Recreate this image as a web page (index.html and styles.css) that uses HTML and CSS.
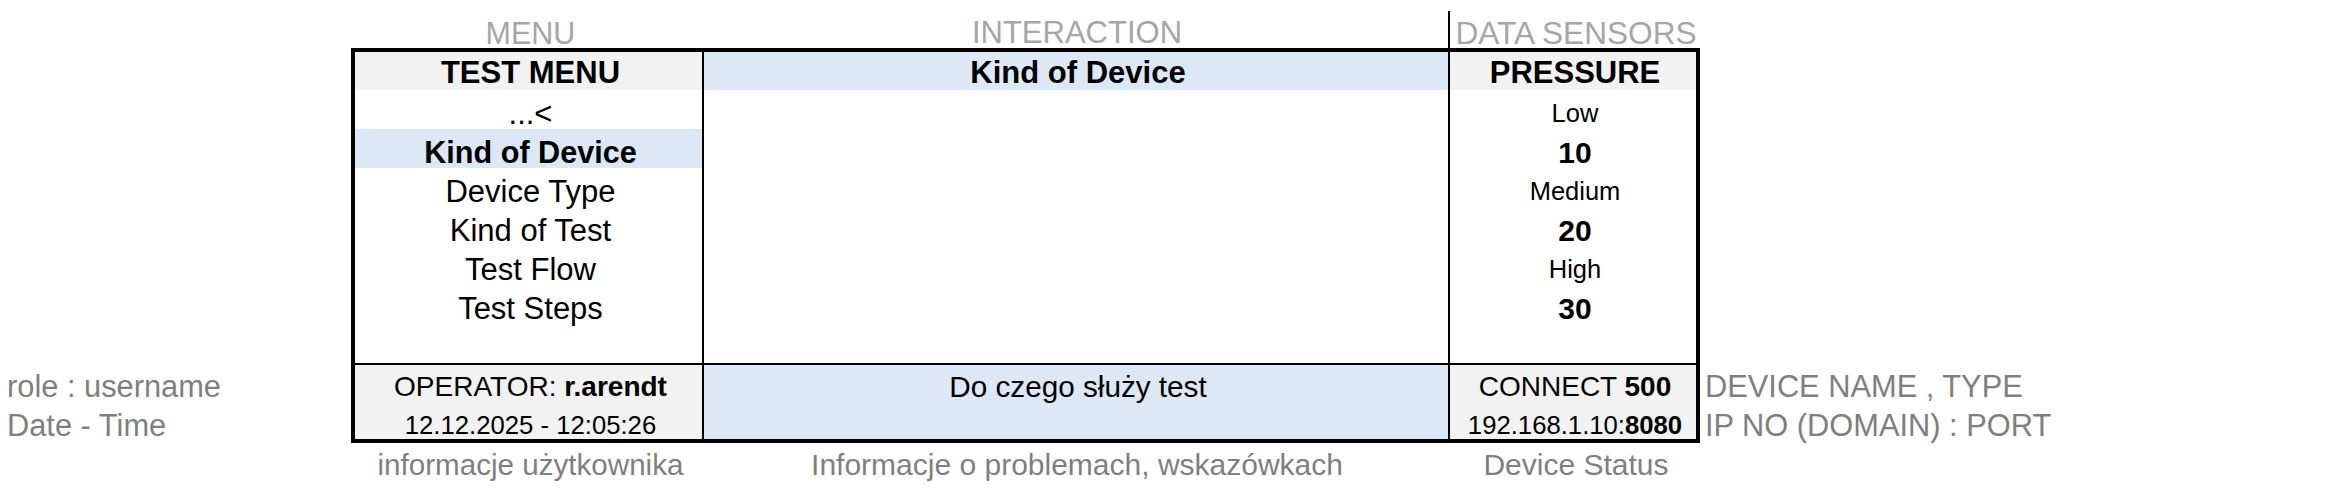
FILE: index.html
```html
<!DOCTYPE html>
<html lang="pl">
<head>
<meta charset="utf-8">
<title>Test Menu</title>
<link rel="stylesheet" href="styles.css">
</head>
<body>
<div class="page">
  <div class="top-labels">
    <div class="top-label top-label-menu">MENU</div>
    <div class="top-label top-label-inter">INTERACTION</div>
    <div class="top-label top-label-data">DATA SENSORS</div>
  </div>

  <div class="side side-left">
    <div class="side-line">role : username</div>
    <div class="side-line">Date - Time</div>
  </div>

  <div class="table">
    <div class="col col-menu">
      <div class="cell head grey">TEST MENU</div>
      <div class="cell">...&lt;</div>
      <div class="cell blue strong">Kind of Device</div>
      <div class="cell">Device Type</div>
      <div class="cell">Kind of Test</div>
      <div class="cell">Test Flow</div>
      <div class="cell">Test Steps</div>
      <div class="cell"></div>
      <div class="foot grey">
        <div class="foot-line">OPERATOR: <b>r.arendt</b></div>
        <div class="foot-line small">12.12.2025 - 12:05:26</div>
      </div>
    </div>
    <div class="col col-inter">
      <div class="cell head blue">Kind of Device</div>
      <div class="inter-body"></div>
      <div class="foot blue">
        <div class="foot-line msg">Do czego służy test</div>
      </div>
    </div>
    <div class="col col-data">
      <div class="cell head grey">PRESSURE</div>
      <div class="cell level">Low</div>
      <div class="cell strong">10</div>
      <div class="cell level">Medium</div>
      <div class="cell strong">20</div>
      <div class="cell level">High</div>
      <div class="cell strong">30</div>
      <div class="cell"></div>
      <div class="foot grey">
        <div class="foot-line">CONNECT <b>500</b></div>
        <div class="foot-line small">192.168.1.10:<b>8080</b></div>
      </div>
    </div>
  </div>

  <div class="side side-right">
    <div class="side-line">DEVICE NAME , TYPE</div>
    <div class="side-line">IP NO (DOMAIN) : PORT</div>
  </div>

  <div class="bottom-labels">
    <div class="bottom-label bottom-label-menu">informacje użytkownika</div>
    <div class="bottom-label">Informacje o problemach, wskazówkach</div>
    <div class="bottom-label">Device Status</div>
  </div>
</div>
</body>
</html>
```

FILE: styles.css
```css
html {
  background: #ffffff;
}

body {
  margin: 0;
  font-family: "Liberation Sans", Arial, sans-serif;
  color: #000000;
}

.page {
  display: grid;
  grid-template-columns: 351px 1349px 1fr;
  grid-template-rows: 48px 395px 53px;
  width: 2339px;
  height: 496px;
}

/* top labels */
.top-labels {
  grid-column: 2;
  grid-row: 1;
  display: grid;
  grid-template-columns: 351px 746px 252px;
}

.top-label {
  box-sizing: border-box;
  text-align: center;
  color: #a6a6a6;
  font-size: 30.5px;
  line-height: 34px;
  padding-top: 15.5px;
  white-space: nowrap;
}

.top-label-menu {
  padding-left: 8px;
}

.top-label-inter {
  font-size: 31px;
  padding-left: 4px;
}

.top-label-data {
  font-size: 31.6px;
  border-left: 2px solid #000000;
  margin-top: 11px;
  padding-top: 4.5px;
  padding-left: 2px;
}

/* side labels */
.side {
  grid-row: 2;
  display: flex;
  flex-direction: column;
  padding-top: 319px;
  color: #7f7f7f;
  font-size: 30.8px;
  white-space: nowrap;
}

.side-left {
  grid-column: 1;
  padding-left: 7px;
}

.side-right {
  grid-column: 3;
  padding-left: 5px;
}

.side-line {
  height: 39px;
  line-height: 39px;
  flex-shrink: 0;
}

/* table */
.table {
  grid-column: 2;
  grid-row: 2;
  border: 4px solid #000000;
  display: grid;
  grid-template-columns: 347px 746px 248px;
}

.col {
  display: flex;
  flex-direction: column;
  min-width: 0;
}

.col-inter,
.col-data {
  border-left: 2px solid #000000;
}

.cell {
  box-sizing: border-box;
  height: 39px;
  line-height: 39px;
  padding-top: 3.5px;
  padding-left: 4px;
  text-align: center;
  font-size: 31px;
  white-space: nowrap;
  flex-shrink: 0;
}

.head {
  height: 38px;
  line-height: 38px;
  padding-top: 2px;
  font-weight: bold;
  font-size: 31px;
}

.strong {
  font-weight: bold;
}

.col-data .strong {
  font-size: 30px;
}

.col-menu .strong {
  font-size: 30.6px;
}

.level {
  font-size: 25.5px;
}

.grey {
  background: #f2f2f2;
}

.blue {
  background: #dce8f5;
}

.inter-body {
  height: 273px;
  flex-shrink: 0;
}

.foot {
  border-top: 2px solid #000000;
  height: 76px;
  box-sizing: border-box;
  padding-top: 1.5px;
  display: flex;
  flex-direction: column;
  overflow: visible;
}

.foot-line {
  box-sizing: border-box;
  height: 39px;
  line-height: 39px;
  padding-left: 4px;
  text-align: center;
  font-size: 28px;
  white-space: nowrap;
  flex-shrink: 0;
}

.foot-line.small {
  font-size: 25.7px;
}

.foot-line.msg {
  font-size: 29.7px;
}

/* bottom labels */
.bottom-labels {
  grid-column: 2;
  grid-row: 3;
  display: grid;
  grid-template-columns: 351px 746px 252px;
}

.bottom-label {
  box-sizing: border-box;
  text-align: center;
  color: #7f7f7f;
  font-size: 30px;
  line-height: 40px;
  padding-top: 1.5px;
  padding-left: 4px;
  white-space: nowrap;
}

.bottom-label-menu {
  font-size: 29.6px;
  padding-left: 8px;
}
```
